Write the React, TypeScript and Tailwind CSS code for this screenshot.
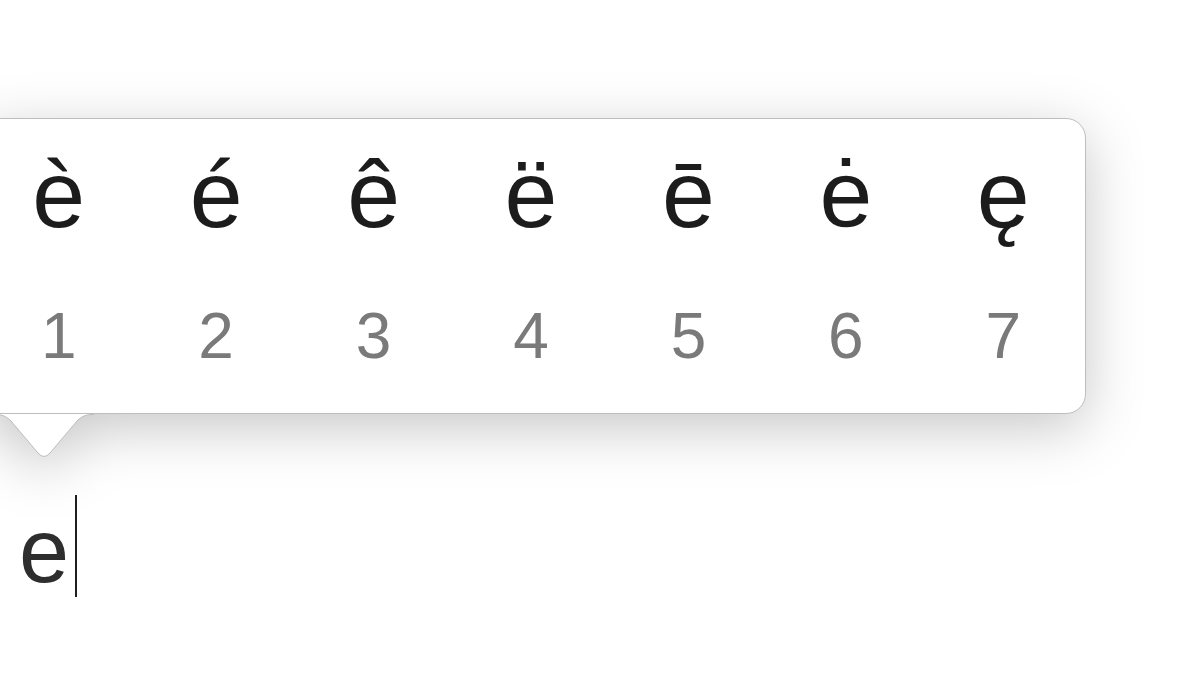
import React from "react";

const letters = ["è", "é", "ê", "ë", "ē", "ė", "ę"];
const digits = ["1", "2", "3", "4", "5", "6", "7"];

export default function App() {
  return (
    <div
      className="relative w-[1200px] h-[675px] overflow-hidden bg-white"
      style={{ fontFamily: '"Liberation Sans", Arial, sans-serif' }}
    >
      {/* typed text with caret */}
      <div className="flex items-start pt-[495px] pl-[19px]">
        <span className="mt-[6px] text-[90px] leading-[100px] text-[#2e2e2e]">e</span>
        <div className="ml-[6px] w-[2px] h-[102px] bg-[#1f1f1f]" />
      </div>

      {/* accent popover */}
      <div className="absolute left-[-21px] top-[118px] [filter:drop-shadow(0_14px_28px_rgba(0,0,0,0.22))]">
        <div className="relative w-[1107px] h-[296px] rounded-[20px] border border-[#bdbdbd] bg-white">
          <div className="grid grid-cols-7 pt-[25px] pr-[3px]">
            {letters.map((l) => (
              <div key={l} className="text-center text-[95px] leading-[100px] text-[#1c1c1c]">
                {l}
              </div>
            ))}
          </div>
          <div className="grid grid-cols-7 mt-[57px] pr-[3px]">
            {digits.map((d) => (
              <div key={d} className="text-center text-[64px] leading-[70px] text-[#7a7a7a]">
                {d}
              </div>
            ))}
          </div>
          <svg
            className="absolute left-[14px] top-[293px]"
            width="100"
            height="48"
            viewBox="0 0 100 48"
          >
            <path
              d="M0 2 C 8 2 12 4 17 9 L 44 41 Q 50 48 56 41 L 83 9 C 88 4 92 2 100 2 Z"
              fill="#ffffff"
            />
            <path
              d="M0 2.5 C 8 2.5 12 4 17 9 L 44 41 Q 50 48 56 41 L 83 9 C 88 4 92 2.5 100 2.5"
              fill="none"
              stroke="#bdbdbd"
              strokeWidth="1"
            />
          </svg>
        </div>
      </div>
    </div>
  );
}
